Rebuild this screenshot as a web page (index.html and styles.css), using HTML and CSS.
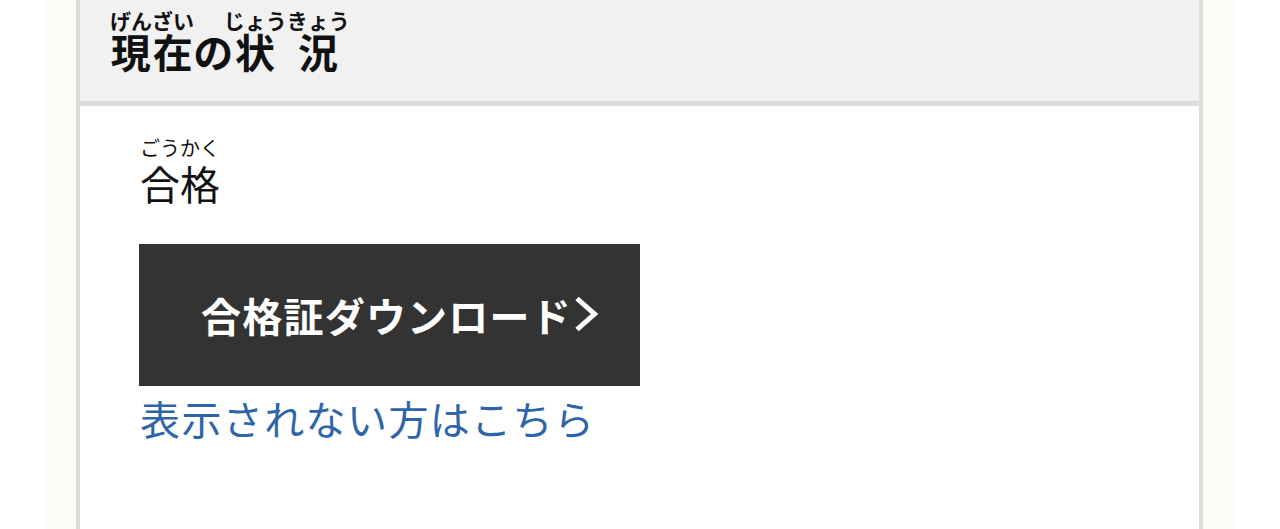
FILE: index.html
```html
<!DOCTYPE html>
<html lang="ja">
<head>
<meta charset="utf-8">
<link rel="stylesheet" href="styles.css">
</head>
<body>
<div class="page">
  <div class="column">
    <div class="box">
      <div class="box-head">
        <h2 class="title"><ruby>現在<rt>げんざい</rt></ruby>の<ruby>状況<rt>じょうきょう</rt></ruby></h2>
      </div>
      <div class="box-body">
        <p class="status"><ruby>合格<rt>ごうかく</rt></ruby></p>
        <a class="btn" href="#">合格証ダウンロード<svg class="chev" viewBox="0 0 24 36" width="24" height="36"><path d="M3 2.5 L20.5 18 L3 33.5" fill="none" stroke="#fff" stroke-width="5" stroke-linejoin="miter" stroke-linecap="butt"/></svg></a>
        <a class="alt" href="#">表示されない方はこちら</a>
      </div>
    </div>
  </div>
</div>
</body>
</html>
```
FILE: styles.css
```css
html, body {
  margin: 0;
  padding: 0;
  background: #ffffff;
  font-family: "Noto Sans CJK JP", "Noto Sans", sans-serif;
}
.page {
  padding: 0 45px;
  height: 529px;
  overflow: hidden;
}
.column {
  background: #fbfbf7;
  padding: 0 32px 0 31px;
  height: 100%;
}
.box {
  border-left: 4px solid #dcdcdc;
  border-right: 4px solid #dcdcdc;
  background: #ffffff;
  height: 100%;
}
.box-head {
  background: #f1f1f1;
  border-bottom: 5px solid #dcdcdc;
  height: 106px;
  padding-left: 30px;
  box-sizing: border-box;
}
.title {
  margin: 0;
  padding-top: 24px;
  font-size: 40px;
  font-weight: 700;
  line-height: 54px;
  letter-spacing: 0.5px;
  color: #111;
}
.title rt {
  font-size: 21px;
  font-weight: 700;
  line-height: 0.8;
  letter-spacing: 0;
}
.box-body {
  padding: 27px 0 0 60px;
}
.status {
  margin: 0;
  font-size: 40px;
  font-weight: 400;
  line-height: 48px;
  color: #111;
}
.status rt {
  font-size: 20px;
  line-height: 1;
  padding-bottom: 2px;
}
.btn {
  margin-top: 37px;
  margin-left: -1px;
  width: 501px;
  height: 142px;
  background: #333333;
  color: #ffffff;
  font-size: 40px;
  font-weight: 700;
  letter-spacing: 1.2px;
  text-decoration: none;
  display: flex;
  align-items: center;
  justify-content: center;
  padding-left: 20px;
  box-sizing: border-box;
}
.chev {
  margin-left: 2px;
  margin-top: -2px;
}
.alt {
  display: block;
  margin-top: 6px;
  font-size: 40px;
  line-height: 52px;
  letter-spacing: 1.4px;
  color: #2e65a8;
  text-decoration: none;
}
```
